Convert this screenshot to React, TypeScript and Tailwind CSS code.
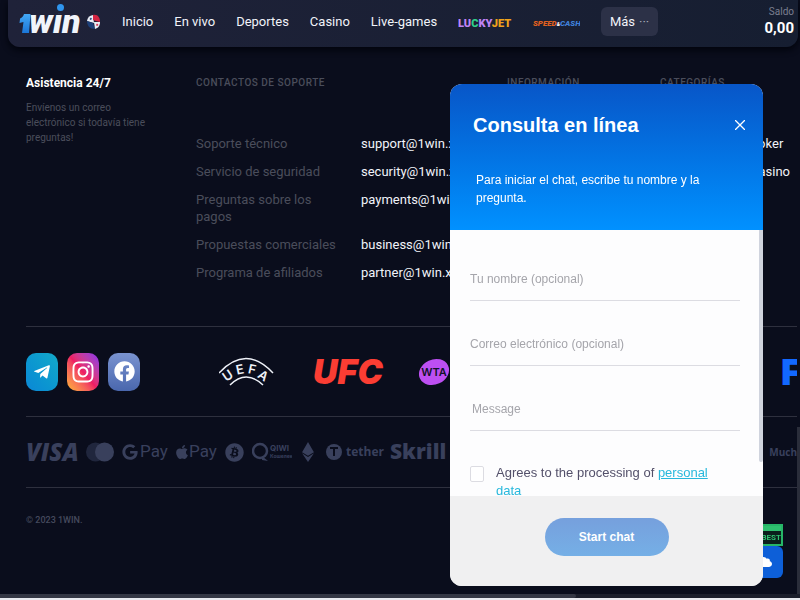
import React from "react";
import {
  FaApple,
  FaBitcoin,
  FaCloud,
  FaEthereum,
  FaFacebook,
  FaGoogle,
  FaInstagram,
  FaTelegramPlane,
} from "react-icons/fa";

interface IContact {
  label: string;
  email: string;
}

interface IField {
  id: string;
  label: string;
}

const contacts: IContact[] = [
  { label: "Soporte técnico", email: "support@1win.xyz" },
  { label: "Servicio de seguridad", email: "security@1win.xyz" },
  { label: "Preguntas sobre los pagos", email: "payments@1win.xyz" },
  { label: "Propuestas comerciales", email: "business@1win.xyz" },
  { label: "Programa de afiliados", email: "partner@1win.xyz" },
];

const navItems = ["Inicio", "En vivo", "Deportes", "Casino", "Live-games"];

const fields: IField[] = [
  { id: "name", label: "Tu nombre (opcional)" },
  { id: "email", label: "Correo electrónico (opcional)" },
];

const Logo: React.FC = () => (
  <svg className="h-10 w-16 shrink-0" viewBox="0 0 64 40" role="img">
    <defs>
      <linearGradient id="one" x1="0" y1="0" x2="0" y2="1">
        <stop offset="0" stopColor="#43a8f5" />
        <stop offset="1" stopColor="#1b76d8" />
      </linearGradient>
    </defs>
    <path
      d="M6 12h6.500l-1.500 19h-7l1.500-11-4 1 .6-4.600c2-1 3.300-2 3.900-4.400z"
      fill="url(#one)"
    />
    <text
      x="11"
      y="31"
      fill="#f1f4fa"
      fontFamily="Roboto, sans-serif"
      fontSize="34"
      fontStyle="italic"
      fontWeight="900"
    >
      win
    </text>
    <ellipse cx="42" cy="6" rx="7" ry="6" fill="#1e2239" />
    <circle cx="42.500" cy="5.500" r="3.500" fill="#2f95ee" />
  </svg>
);

const FlagBall: React.FC = () => (
  <svg className="h-4 w-4 shrink-0" viewBox="0 0 16 16">
    <path d="M7 1a7 7 0 0 0-6 6l7 2z" fill="#e9edf5" />
    <path d="M7 1c5-1 7 3 7 7l-4-1-3-1z" fill="#d32442" />
    <path d="M1 7l6 2 2 6c-5 0-8-3-8-8z" fill="#1c3f78" />
    <path d="M8 8l6 0c0 4-2 6-5 7z" fill="#e9edf5" />
    <path d="M3.500 5l1.500-1.500 1 1.500-1.500 1z" fill="#1c3f78" />
    <path d="M10 11l1-1.500 1.500 1.500-1.500 1z" fill="#d32442" />
  </svg>
);

const LuckyJet: React.FC = () => (
  <svg className="h-6 w-[54px]" viewBox="0 0 54 24">
    <text
      x="0"
      y="17"
      fontFamily="Roboto, sans-serif"
      fontSize="11"
      fontWeight="900"
      fill="#c084f5"
    >
      LU<tspan fill="#2fd08a">C</tspan>KY<tspan fill="#f0a21b">JET</tspan>
    </text>
  </svg>
);

const SpeedCash: React.FC = () => (
  <svg className="h-6 w-[47px]" viewBox="0 0 47 24">
    <text
      x="0"
      y="16"
      fontFamily="Roboto, sans-serif"
      fontSize="8"
      fontStyle="italic"
      fontWeight="900"
      fill="#e0601f"
    >
      SPEED<tspan fill="#ffffff" fontSize="5">&amp;</tspan>
      <tspan fill="#3f7fd8">CASH</tspan>
    </text>
  </svg>
);

const Uefa: React.FC = () => (
  <svg className="h-8 w-14 shrink-0" viewBox="0 0 56 32">
    <g fill="none" stroke="#eef1f8" strokeWidth="1.500">
      <path d="M0 17Q27-12 54 17" />
      <path d="M11 29Q27 13 44 29" />
    </g>
    <g
      fill="#eef1f8"
      fontFamily="Inter, sans-serif"
      fontSize="13"
      fontWeight="600"
      textAnchor="middle"
    >
      <text x="9" y="24" transform="rotate(-34 9 20)">U</text>
      <text x="21" y="18" transform="rotate(-12 21 14)">E</text>
      <text x="33" y="18" transform="rotate(12 33 14)">F</text>
      <text x="44" y="24" transform="rotate(34 44 20)">A</text>
    </g>
  </svg>
);

const Wta: React.FC = () => (
  <svg className="h-8 w-8 shrink-0" viewBox="0 0 32 32">
    <ellipse cx="15" cy="16" rx="15.500" ry="12.500" fill="#bd4ff2" transform="rotate(-25 15 16)" />
    <text x="15" y="20" fill="#11122a" fontFamily="Inter, sans-serif" fontSize="11" fontWeight="600" textAnchor="middle">
      WTA
    </text>
  </svg>
);

const Qiwi: React.FC = () => (
  <svg className="h-5 w-10 shrink-0" viewBox="0 0 40 20">
    <circle cx="8" cy="9" r="7" fill="none" stroke="currentColor" strokeWidth="2.500" />
    <path d="M10 14l6 5-6-1z" fill="currentColor" />
    <text x="18" y="9" fill="currentColor" fontFamily="Inter, sans-serif" fontSize="8" fontWeight="700">QIWI</text>
    <text x="18" y="16" fill="currentColor" fontFamily="Inter, sans-serif" fontSize="5" fontWeight="700">Кошелек</text>
  </svg>
);

const Header: React.FC = () => {
  return (
    <header className="ml-2 mr-0.5 flex h-[47px] items-center rounded-b-xl bg-linear-to-r from-[#1f2239] to-[#161e31] pb-1 pl-2.5 pr-1 shadow-[0_3px_6px_#02040c]">
      <a href="#" aria-label="1win" className="flex items-center gap-1">
        <Logo />
        <FlagBall />
      </a>
      <nav className="ml-5 flex items-center gap-[21px] whitespace-nowrap text-[13px] leading-5 text-[#f1f3f9]">
        {navItems.map((item) => (
          <a href="#" key={item}>
            {item}
          </a>
        ))}
        <a href="#" aria-label="Lucky Jet">
          <LuckyJet />
        </a>
        <a href="#" aria-label="Speed and Cash">
          <SpeedCash />
        </a>
        <button className="flex h-[29px] w-[57px] items-center justify-center gap-1 rounded-md bg-[#2c3147]">
          Más
          <span className="text-[#a6a9b6]">···</span>
        </button>
      </nav>
      <div className="ml-auto text-right">
        <p className="text-[10px] leading-3 text-[#7b7f90]">Saldo</p>
        <p className="text-[15px] font-bold leading-5 text-white">0,00</p>
      </div>
    </header>
  );
};

const Support: React.FC = () => {
  return (
    <section className="flex whitespace-nowrap pb-[45px] pt-[27px]">
      <div className="w-[170px] shrink-0">
        <h2 className="text-[12px] font-bold leading-[18px] text-white">
          Asistencia 24/7
        </h2>
        <p className="mt-2 w-32 whitespace-normal text-[10px] leading-[15px] text-[#4a4d5b]">
          Envíenos un correo electrónico si todavía tiene preguntas!
        </p>
      </div>
      <div className="w-[311px] shrink-0">
        <h3 className="text-[10px] font-medium leading-[18px] tracking-wider text-[#4a4d5b]">
          CONTACTOS DE SOPORTE
        </h3>
        <dl className="mt-[43px] flex flex-col gap-[11px] text-[13px] leading-[17px]">
          {contacts.map((contact) => (
            <div className="flex" key={contact.email}>
              <dt className="w-[165px] shrink-0 whitespace-normal pr-6 text-[#4a4d5b]">
                {contact.label}
              </dt>
              <dd className="text-[#f1f3f9]">
                <a href={`mailto:${contact.email}`}>{contact.email}</a>
              </dd>
            </div>
          ))}
        </dl>
      </div>
      <div className="w-[153px] shrink-0">
        <h3 className="text-[10px] font-medium leading-[18px] tracking-wider text-[#4a4d5b]">
          INFORMACIÓN
        </h3>
      </div>
      <div className="shrink-0">
        <h3 className="text-[10px] font-medium leading-[18px] tracking-wider text-[#4a4d5b]">
          CATEGORÍAS
        </h3>
        <ul className="ml-[90px] mt-[43px] flex flex-col gap-[11px] text-[13px] leading-[17px] text-[#f1f3f9]">
          <li>
            <a href="#">Poker</a>
          </li>
          <li>
            <a href="#">Casino</a>
          </li>
        </ul>
      </div>
    </section>
  );
};

const Partners: React.FC = () => {
  return (
    <section className="flex h-[90px] items-center border-t border-[#2e303e]">
      <div className="flex w-[193px] shrink-0 gap-[9px] text-white">
        <a href="#" aria-label="Telegram" className="flex h-[38px] w-8 items-center justify-center rounded-[10px] bg-linear-to-tr from-[#0c87d6] to-[#14a9c8]">
          <FaTelegramPlane className="h-[18px] w-[18px]" />
        </a>
        <a href="#" aria-label="Instagram" className="flex h-[38px] w-8 items-center justify-center rounded-[10px] bg-linear-to-tr from-[#fdb32b] via-[#ee1c63] to-[#8a26f0]">
          <FaInstagram className="h-6 w-6" />
        </a>
        <a href="#" aria-label="Facebook" className="flex h-[38px] w-8 items-center justify-center rounded-[10px] bg-linear-to-b from-[#7a93d0] to-[#4a67ad]">
          <FaFacebook className="h-[21px] w-[21px]" />
        </a>
      </div>
      <Uefa />
      <span className="ml-[38px] w-[106px] shrink-0 font-[Inter,sans-serif] text-[34px] font-black italic leading-9 text-[#fb3d33]">
        UFC
      </span>
      <Wta />
      <span className="ml-auto w-4 shrink-0 overflow-hidden font-[Inter,sans-serif] text-[36px] font-black leading-9 text-[#1268ff]">
        F
      </span>
    </section>
  );
};

const Payments: React.FC = () => {
  return (
    <section className="flex h-[72px] items-center whitespace-nowrap border-y border-[#2e303e] text-[#39405c]">
      <span className="w-[60px] shrink-0 font-[Open_Sans,sans-serif] text-[24px] font-extrabold italic">
        VISA
      </span>
      <svg className="h-5 w-7 shrink-0" viewBox="0 0 28 20">
        <circle cx="9.500" cy="10" r="9.500" fill="#20263d" />
        <circle cx="18.500" cy="10" r="9.500" fill="#39405c" />
      </svg>
      <span className="ml-2 flex w-[53px] shrink-0 items-center gap-0.5 text-[17px]">
        <FaGoogle className="h-4 w-4" />
        Pay
      </span>
      <span className="flex w-[50px] shrink-0 items-center text-[17px]">
        <FaApple className="h-4 w-3.5" />
        Pay
      </span>
      <FaBitcoin className="mr-2 h-[19px] w-[19px] shrink-0" />
      <Qiwi />
      <FaEthereum className="ml-2 h-5 w-4 shrink-0" />
      <span className="ml-2.5 flex w-16 shrink-0 items-center gap-1 font-[Open_Sans,sans-serif] text-[12px] font-bold">
        <svg className="h-4 w-4 shrink-0" viewBox="0 0 16 16">
          <circle cx="8" cy="8" r="8" fill="currentColor" />
          <path d="M4 4h8M8 4v8" stroke="#0a0d1c" strokeWidth="2" />
        </svg>
        tether
      </span>
      <span className="font-[Open_Sans,sans-serif] text-[21px] font-extrabold">
        Skrill
      </span>
      <span className="ml-auto shrink-0 font-[Open_Sans,sans-serif] text-[10px] font-bold">
        Much
      </span>
    </section>
  );
};

const ChatDialog: React.FC = () => {
  return (
    <form
      aria-labelledby="chat-title"
      className="fixed bottom-3.5 right-[37px] flex w-[313px] flex-col overflow-hidden rounded-xl bg-[#fdfdfe] font-[Liberation_Sans,sans-serif]"
    >
      <div className="h-[146px] bg-linear-to-b from-[#0856c8] to-[#0191ff] pt-[25px] text-white">
        <div className="flex items-center justify-between pl-[23px] pr-[18px]">
          <h2 id="chat-title" className="text-[20px] font-bold leading-8">
            Consulta en línea
          </h2>
          <button type="button" aria-label="Cerrar">
            <svg className="h-2.5 w-2.5" viewBox="0 0 10 10">
              <path d="M0 0l10 10M10 0L0 10" stroke="currentColor" strokeWidth="1.300" />
            </svg>
          </button>
        </div>
        <p className="mt-[30px] pl-[26px] pr-12 text-[12px] leading-[18px]">
          Para iniciar el chat, escribe tu nombre y la pregunta.
        </p>
      </div>
      <div className="flex h-[266px] overflow-hidden">
        <div className="flex grow flex-col gap-[21px] pl-5 pr-[19px] pt-[27px]">
          {fields.map((field) => (
            <input
              key={field.id}
              id={field.id}
              aria-label={field.label}
              placeholder={field.label}
              className="h-11 w-full shrink-0 border-b border-[#dcdce2] text-[12px] placeholder:text-[#a5a5ab]"
            />
          ))}
          <textarea
            aria-label="Message"
            placeholder="Message"
            rows={1}
            className="h-11 w-full shrink-0 resize-none border-b border-[#dcdce2] px-0.5 py-3 text-[12px] leading-5 placeholder:text-[#a5a5ab]"
          />
          <div className="mt-3 flex shrink-0 gap-3">
            <input
              id="agree"
              type="checkbox"
              className="mt-0.5 h-4 w-3.5 shrink-0 appearance-none rounded-xs border border-[#dcdce2] bg-white"
            />
            <label htmlFor="agree" className="pr-6 text-[13px] leading-[18px] text-[#53506a]">
              Agrees to the processing of{" "}
              <a href="#" className="text-[#27b8dc] underline">
                personal data
              </a>
            </label>
          </div>
        </div>
        <div className="h-[232px] w-1 shrink-0 rounded-b-sm bg-[#d0d4de]"></div>
      </div>
      <div className="flex h-[90px] justify-center bg-[#f0f0f1] pt-[22px]">
        <button
          type="button"
          className="h-[38px] w-[124px] rounded-full bg-linear-to-b from-[#76a0dd] to-[#75afe6] text-[12px] font-bold text-white"
        >
          Start chat
        </button>
      </div>
    </form>
  );
};

const App: React.FC = () => {
  return (
    <div className="flex min-h-screen flex-col overflow-hidden bg-[#0a0d1c] font-[Roboto,sans-serif]">
      <Header />
      <main className="pl-[26px] pr-[3px]">
        <Support />
        <Partners />
        <Payments />
        <p className="mt-[26px] text-[9px] font-medium leading-3 text-[#454a5d]">
          © 2023 1WIN.
        </p>
      </main>
      <div className="mt-auto h-1.5 border-b-2 border-[#e8e9ee] bg-[#1b1e2b]">
        <div className="h-1 w-[72%] rounded-r-sm bg-[#343744]"></div>
      </div>
      <div className="fixed bottom-1.5 right-0 h-[167px] w-[3px] bg-[#2a2d3a]"></div>
      {/* rating badge and chat launcher, mostly hidden by the dialog */}
      <div className="fixed bottom-[22px] right-[17px] flex w-9 flex-col items-end">
        <span className="flex h-[22px] w-9 items-end justify-end border-2 border-[#26b567] bg-linear-to-b from-[#2fc06f] from-30% to-[#0a1f1c] to-30% text-[8px] font-bold leading-3 text-[#2fc06f]">
          BEST
        </span>
        <button
          aria-label="Abrir chat"
          className="flex h-8 w-9 items-center justify-center rounded-md bg-[#0d5fd8] text-white"
        >
          <FaCloud className="h-3 w-3.5" />
        </button>
      </div>
      <ChatDialog />
    </div>
  );
};

export default App;
